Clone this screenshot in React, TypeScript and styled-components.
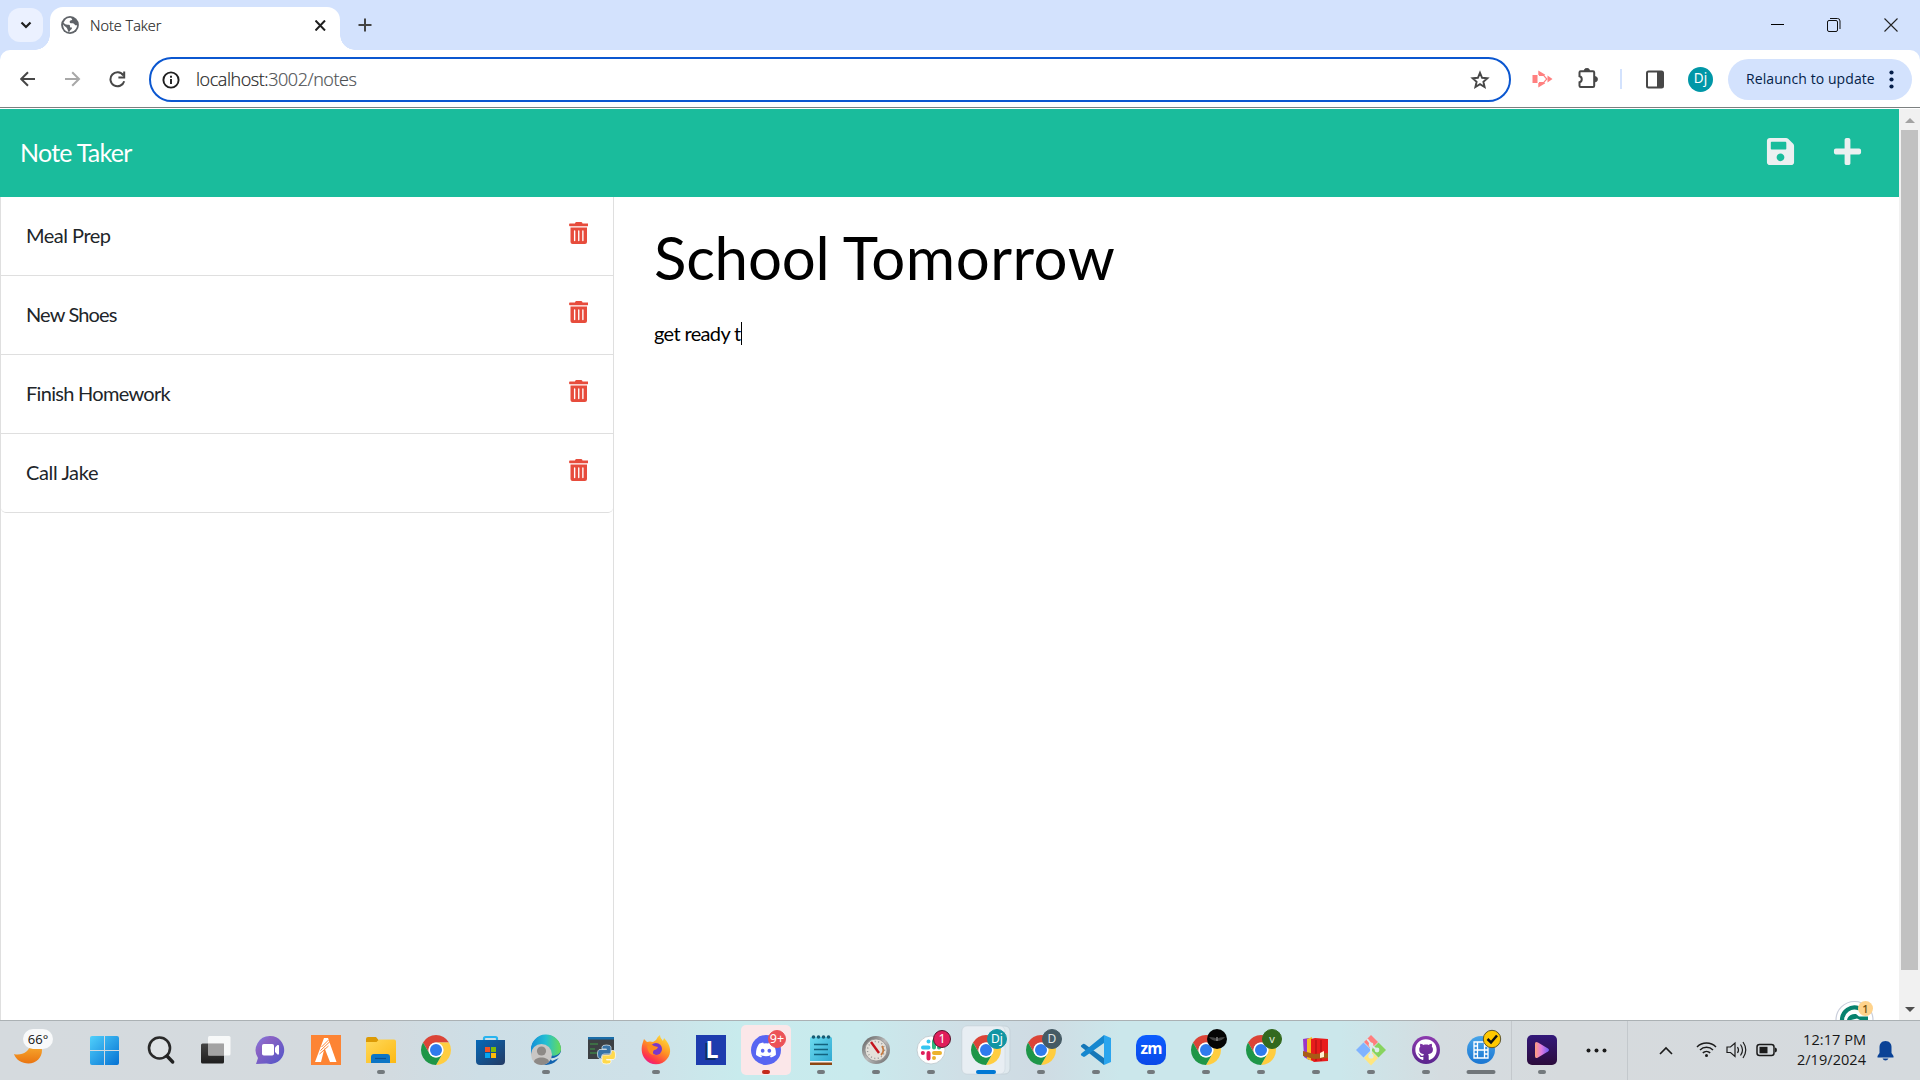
import React from "react";
import styled, { createGlobalStyle } from "styled-components";
import { FaSave, FaPlus, FaTrashAlt, FaGithub } from "react-icons/fa";

const GlobalStyle = createGlobalStyle`
  * { box-sizing: border-box; }
  body { margin: 0; overflow: hidden; background: #fff; }
`;

const UI = `"Open Sans", "Noto Sans", sans-serif`;

const Screen = styled.div`
  display: flex;
  flex-direction: column;
  width: 1920px;
  height: 1080px;
  background: #fff;
  font-family: Lato, sans-serif;
`;

/* ---------- browser chrome ---------- */
const TabStrip = styled.div`
  display: flex;
  height: 50px;
  padding-left: 8px;
  background: #d3e2fd;
`;
const TabSearch = styled.div`
  width: 35px;
  height: 34px;
  margin-top: 8px;
  border-radius: 12px;
  background: #ebf1ff;
  display: grid;
  place-items: center;
`;
const Tab = styled.div`
  position: relative;
  display: flex;
  align-items: center;
  width: 290px;
  height: 43px;
  margin: 7px 0 0 7px;
  padding: 0 13px 7px 11px;
  border-radius: 13px 13px 0 0;
  background: #fff;
  &::before, &::after {
    content: "";
    position: absolute;
    bottom: 0;
    width: 15px;
    height: 15px;
  }
  &::before { left: -15px; background: radial-gradient(circle at 0 0, transparent 14.5px, #fff 15px); }
  &::after { right: -15px; background: radial-gradient(circle at 100% 0, transparent 14.5px, #fff 15px); }
`;
const TabTitle = styled.span`
  flex: 1;
  margin-left: 11px;
  padding-top: 2px;
  font: 300 14.5px/20px ${UI};
  letter-spacing: 0;
  color: #1f1f1f;
  -webkit-text-stroke: 0.2px #1f1f1f;
`;
const NewTab = styled.div`
  width: 50px;
  height: 50px;
  display: grid;
  place-items: center;
`;
const WindowButtons = styled.div`
  display: flex;
  margin-left: auto;
`;
const WindowButton = styled.div`
  width: 57px;
  height: 49px;
  display: grid;
  place-items: center;
`;
const ToolbarBack = styled.div`
  height: 59px;
  background: linear-gradient(#d3e2fd 30px, #fff 30px);
`;
const Toolbar = styled.div`
  display: flex;
  align-items: center;
  height: 58px;
  padding: 1px 8px 0 5px;
  border-radius: 10px 10px 0 0;
  border-bottom: 1px solid #7c8080;
  background: #fff;
`;
const ToolSlot = styled.div<{ $w: number }>`
  width: ${(p) => p.$w}px;
  height: 46px;
  display: grid;
  place-items: center;
  flex: none;
`;
const Omnibox = styled.div`
  display: flex;
  align-items: center;
  flex: 1;
  height: 45px;
  margin: 1px 8px 0 9px;
  padding: 0 19px 0 11px;
  border: 2px solid #0b57d0;
  border-radius: 23px;
`;
const Address = styled.div`
  flex: 1;
  margin-left: 16px;
  padding-bottom: 1px;
  font: 300 18px/26px ${UI};
  letter-spacing: -0.45px;
  color: #4c4f52;
  -webkit-text-stroke: 0.2px currentColor;
  b { font-weight: 300; color: #1f1f1f; }
`;
const Divider = styled.div`
  width: 2px;
  height: 20px;
  background: #d3e2fd;
`;
const Profile = styled.div`
  width: 25px;
  height: 25px;
  border-radius: 50%;
  background: #0097a7;
  color: #fff;
  font: 400 13.5px/23px "Noto Sans", sans-serif;
  text-align: center;
`;
const Relaunch = styled.div`
  display: flex;
  align-items: center;
  justify-content: space-between;
  width: 184px;
  height: 41px;
  margin-left: 6px;
  padding: 0 18px;
  border-radius: 21px;
  background: #d3e2fd;
  color: #041e49;
  font: 400 14px/20px ${UI};
  letter-spacing: 0.08px;
  white-space: nowrap;
`;

/* ---------- page ---------- */
const Viewport = styled.div`
  display: flex;
  height: 911px;
  overflow: hidden;
`;
const Page = styled.div`
  display: flex;
  flex-direction: column;
  width: 1899px;
`;
const NavBar = styled.header`
  display: flex;
  align-items: center;
  flex: none;
  height: 88px;
  padding: 0 36px 2px 20px;
  background: #1abc9c;
  color: #fff;
`;
const Brand = styled.h1`
  flex: 1;
  margin: 0;
  font-size: 25px;
  font-weight: 400;
  line-height: 30px;
  letter-spacing: -0.75px;
`;
const NavIcon = styled.span`
  display: flex;
  margin: -1px 0 0 36px;
  color: #ecf0f1;
  font-size: 31px;
`;
const Body = styled.div`
  display: flex;
  flex: 1;
`;
const Sidebar = styled.aside`
  width: 614px;
  border: solid #dfdfdf;
  border-width: 0 1px;
`;
const NoteItem = styled.div<{ $tracking: number }>`
  display: flex;
  justify-content: space-between;
  height: 79px;
  padding: 23px 25px 0 25px;
  border-bottom: 1px solid #dfdfdf;
  color: #212529;
  font-size: 20px;
  line-height: 30px;
  letter-spacing: ${(p) => p.$tracking}px;
  &:last-child { border-radius: 0 0 5px 5px; }
  svg { width: 19.5px; height: 22px; margin-top: 2px; color: #e74c3c; }
`;
const Editor = styled.main`
  position: relative;
  flex: 1;
  padding: 24px 40px;
  color: #000;
`;
const NoteTitle = styled.h2`
  margin: 0;
  font-size: 60px;
  font-weight: 400;
  line-height: 72px;
  letter-spacing: 0.5px;
  word-spacing: -2px;
  &::first-line { letter-spacing: 0.2px; }
`;
const Word = styled.span<{ $tracking: number }>`
  letter-spacing: ${(p) => p.$tracking}px;
`;
const NoteText = styled.p`
  display: flex;
  align-items: center;
  margin: 25px 0 0;
  font-size: 20px;
  line-height: 30px;
  letter-spacing: -0.65px;
`;
const Caret = styled.i`
  width: 1px;
  height: 23px;
  background: #000;
`;
const Assistant = styled.div`
  position: absolute;
  right: 22px;
  bottom: 0;
  width: 42px;
  height: 22px;
  svg { display: block; }
`;
const AssistantBadge = styled.span`
  position: absolute;
  left: 23px;
  top: 3px;
  width: 15px;
  height: 15px;
  border-radius: 50%;
  background: #ffd38c;
  color: #7a5410;
  font: 600 11px/15px ${UI};
  text-align: center;
`;
const ScrollBar = styled.div`
  display: flex;
  flex-direction: column;
  justify-content: space-between;
  align-items: center;
  width: 21px;
  background: #f1f1f1;
`;
const ScrollThumb = styled.div`
  width: 17px;
  height: 840px;
  background: #c1c1c1;
`;
const ScrollArrow = styled.div<{ $down?: boolean }>`
  height: ${(p) => (p.$down ? 50 : 21)}px;
  padding-top: ${(p) => (p.$down ? 37 : 9)}px;
  svg { display: block; }
`;

/* ---------- taskbar ---------- */
const TaskBar = styled.footer`
  display: flex;
  height: 60px;
  box-shadow: inset 0 1px 0 #abb1b4;
  background: linear-gradient(90deg, #d5dade 0, #d4dade 360px, #cddee6 480px, #cee1e8 640px, #c8ebed 740px,
    #c9eaed 860px, #cfdfe6 960px, #cfdbe3 1040px, #cbe7eb 1120px, #cbe7eb 1340px, #d4dce0 1440px, #d6dadd 1560px, #d5dade 100%);
`;
const Weather = styled.div`
  position: relative;
  width: 78px;
`;
const Temperature = styled.span`
  position: absolute;
  left: 23px;
  top: 9px;
  width: 30px;
  height: 20px;
  border-radius: 10px;
  background: #f8f9fa;
  color: #111;
  font: 400 13px/20px ${UI};
  text-align: center;
`;
const AppSlot = styled.div<{ $w?: number }>`
  position: relative;
  width: ${(p) => p.$w ?? 55}px;
  height: 60px;
  flex: none;
  svg { display: block; }
`;
const Badge = styled.span<{ $bg: string; $x?: number; $y?: number; $s?: number; $edge?: string; $fs?: number; $c?: string }>`
  position: absolute;
  left: ${(p) => p.$x ?? 29}px;
  top: ${(p) => p.$y ?? 9}px;
  width: ${(p) => p.$s ?? 20}px;
  height: ${(p) => p.$s ?? 20}px;
  border-radius: 50%;
  background: ${(p) => p.$bg};
  border: 1px solid ${(p) => p.$edge ?? p.$bg};
  color: ${(p) => p.$c ?? "#fff"};
  font: 400 ${(p) => p.$fs ?? 12}px/${(p) => (p.$s ?? 20) - 3}px "Noto Sans", sans-serif;
  text-align: center;
`;
const LetterTile = styled.div`
  position: absolute;
  left: 13px;
  top: 15px;
  width: 30px;
  height: 30px;
  padding-left: 2px;
  background: #1d3cae;
  color: #fff;
  font: 700 23px/29px "Open Sans", sans-serif;
  text-align: center;
  text-shadow: -2px 2px 0 #0c2c63;
`;
const ZoomTile = styled.div`
  position: absolute;
  left: 13px;
  top: 15px;
  width: 30px;
  height: 30px;
  border-radius: 10px;
  background: linear-gradient(#0b5cff, #0a49e8);
  color: #fff;
  font: 700 15.5px/26px "Open Sans", sans-serif;
  letter-spacing: -0.8px;
  text-align: center;
`;
const GlyphHolder = styled.div<{ $x: number; $y: number; $size: number; $color: string }>`
  position: absolute;
  left: ${(p) => p.$x}px;
  top: ${(p) => p.$y}px;
  font-size: ${(p) => p.$size}px;
  color: ${(p) => p.$color};
`;
const Tray = styled.div`
  display: flex;
  flex: 1;
  align-items: center;
  border-left: 1px solid #c3c8cc;
  margin-top: 1px;
`;
const TrayIcon = styled.div<{ $w: number; $pad?: number }>`
  width: ${(p) => p.$w}px;
  height: 58px;
  padding-left: ${(p) => p.$pad ?? 0}px;
  display: grid;
  place-items: center;
  flex: none;
`;
const Clock = styled.div`
  flex: none;
  width: 84px;
  padding-bottom: 2px;
  color: #171717;
  font: 400 14.5px/20px ${UI};
  letter-spacing: 0.05px;
  text-align: right;
  white-space: nowrap;
`;

const Art = ({ children, w = 55 }: { children?: React.ReactNode; w?: number }) => (
  <svg width={w} height={60} viewBox={`0 0 ${w} 60`}>{children}</svg>
);
const Dot = ({ color = "#73797d" }) => <rect x="24" y="50" width="8" height="4" rx="2" fill={color} />;

const Chrome = () => (
  <g transform="translate(13 15) scale(.625)">
    <path fill="#db4437" d="M24 12H44.78A24 24 0 0 0 3.22 12L13.6 30A12 12 0 0 1 24 12Z" />
    <path fill="#ffcd40" d="M44.78 12A24 24 0 0 1 24 48L34.39 30A12 12 0 0 0 24 12Z" />
    <path fill="#1e9648" d="M3.22 12A24 24 0 0 0 24 48L34.39 30A12 12 0 0 1 13.6 30Z" />
    <circle cx="24" cy="24" r="12" fill="#fff" />
    <circle cx="24" cy="24" r="9.6" fill="#2f7bed" />
  </g>
);

const Gradients = styled.svg`
  position: absolute;
`;
const Defs = () => (
  <Gradients width="0" height="0">
    <defs>
      <linearGradient id="win" x1="0" y1="0" x2="1" y2="1"><stop stopColor="#50d0fb" /><stop offset="1" stopColor="#0571d3" /></linearGradient>
      <linearGradient id="moon" x1="0" y1="0" x2="0" y2="1"><stop stopColor="#f9b233" /><stop offset="1" stopColor="#ea7411" /></linearGradient>
      <linearGradient id="dark" x1="0" y1="0" x2="0" y2="1"><stop stopColor="#444" /><stop offset="1" stopColor="#1e1e1e" /></linearGradient>
      <linearGradient id="chat" x1="0" y1="0" x2="1" y2="1"><stop stopColor="#7c7fe6" /><stop offset=".3" stopColor="#8a62c4" /><stop offset="1" stopColor="#5055c9" /></linearGradient>
      <linearGradient id="folder" x1="0" y1="0" x2="1" y2="1"><stop stopColor="#ffd95b" /><stop offset="1" stopColor="#fdb913" /></linearGradient>
      <linearGradient id="store" x1="0" y1="0" x2="1" y2="1"><stop stopColor="#0669b8" /><stop offset="1" stopColor="#243a63" /></linearGradient>
      <linearGradient id="edge" x1="0" y1="0" x2="1" y2="0"><stop stopColor="#148fd8" /><stop offset=".5" stopColor="#24bfd2" /><stop offset="1" stopColor="#68dc54" /></linearGradient>
      <linearGradient id="fox" x1=".8" y1="0" x2=".2" y2="1"><stop stopColor="#ffe23d" /><stop offset=".45" stopColor="#ff9123" /><stop offset=".8" stopColor="#ff3548" /><stop offset="1" stopColor="#e4169b" /></linearGradient>
      <linearGradient id="note" x1="0" y1="0" x2="1" y2="1"><stop stopColor="#6ddbf0" /><stop offset="1" stopColor="#2ba6cf" /></linearGradient>
      <linearGradient id="metal" x1="0" y1="0" x2="1" y2="1"><stop stopColor="#555" /><stop offset=".5" stopColor="#bbb" /><stop offset="1" stopColor="#666" /></linearGradient>
      <linearGradient id="git" x1="0" y1="0" x2="0" y2="1"><stop stopColor="#8c3aae" /><stop offset="1" stopColor="#59258d" /></linearGradient>
      <linearGradient id="film" x1="0" y1="0" x2="0" y2="1"><stop stopColor="#48a5e9" /><stop offset="1" stopColor="#1a76d2" /></linearGradient>
      <linearGradient id="purple" x1="0" y1="0" x2="0" y2="1"><stop stopColor="#33187a" /><stop offset="1" stopColor="#2c0c3c" /></linearGradient>
      <linearGradient id="play" x1="0" y1="0" x2="1" y2="0"><stop stopColor="#ffa07a" /><stop offset=".45" stopColor="#e07be0" /><stop offset="1" stopColor="#6a5cf5" /></linearGradient>
    </defs>
  </Gradients>
);

const Browser = () => (
  <>
    <TabStrip>
      <TabSearch>
        <svg width="12" height="8" viewBox="0 0 12 8"><path d="M1.5 1.5L6 6l4.5-4.5" fill="none" stroke="#1f1f1f" strokeWidth="2.2" /></svg>
      </TabSearch>
      <Tab>
        <svg width="18" height="18" viewBox="0 0 18 18">
          <circle cx="9" cy="9" r="8.9" fill="#5f6368" />
          <path d="M9.8 1.9C8 1.7 5.4 2.6 4 4.2L2.5 6.8c1.2 1 2.2 2 4.3 2 1.8 0 2.2.4 2.2 1.6 0 1.1.9 1.2 1.9 1.2.3 1.2-.5 2-1.4 2.3l-1.5 2.3c4.3.3 8-3 8.1-7.1-1.3.6-2.1.2-2.7-.9-.6-1-1.7-.9-2.7-.9-1.4 0-2.2-.5-2-1.8.2-1.2 1.4-1 2.2-1.4.7-.4.2-1.5-1.1-2.2z" fill="#fff" />
          <path d="M2.1 8.2c.3 1.2 2.3 2.2 3.3 3.4.9 1 1.2 2.2 2.2 4.4C4.5 15.6 2 12.6 2.1 8.2Z" fill="#fff" />
        </svg>
        <TabTitle>Note Taker</TabTitle>
        <svg width="12" height="11" viewBox="0 0 12 11"><path d="M.5.5l9.5 10M10 .5l-9.5 10" stroke="#1f1f1f" strokeWidth="2" /></svg>
      </Tab>
      <NewTab>
        <svg width="14" height="14" viewBox="0 0 14 14"><path d="M7 .5v13M.5 7h13" stroke="#444" strokeWidth="2" /></svg>
      </NewTab>
      <WindowButtons>
        <WindowButton><svg width="13" height="13" viewBox="0 0 13 13"><path d="M0 6.5h13" stroke="#000" /></svg></WindowButton>
        <WindowButton>
          <svg width="16" height="14" viewBox="0 0 16 14" fill="none" stroke="#111">
            <rect x=".5" y="2.5" width="10" height="11" rx="1.5" /><path d="M3 .5h7.5a2.5 2.5 0 0 1 2.5 2.5V11" />
          </svg>
        </WindowButton>
        <WindowButton><svg width="15" height="14" viewBox="0 0 15 14"><path d="M.5.5l13 13M13.5.5l-13 13" stroke="#222" strokeWidth="1.1" /></svg></WindowButton>
      </WindowButtons>
    </TabStrip>
    <ToolbarBack>
      <Toolbar>
        <ToolSlot $w={45}><svg width="16" height="16" viewBox="0 0 16 16" fill="none" stroke="#474747" strokeWidth="2"><path d="M15 8H1.5M8 1.2L1.2 8 8 14.8" /></svg></ToolSlot>
        <ToolSlot $w={45}><svg width="16" height="16" viewBox="0 0 16 16" fill="none" stroke="#a8a8a8" strokeWidth="2"><path d="M0 8H13.5M7.2 1.2L14 8l-6.8 6.8" /></svg></ToolSlot>
        <ToolSlot $w={45}><svg width="17" height="17" viewBox="0 0 17 17" fill="none" stroke="#474747" strokeWidth="2"><path d="M14.3 4.4A7 7 0 1 0 15.2 10.2M15.2.6v6H9.4" /></svg></ToolSlot>
        <Omnibox>
          <svg width="18" height="18" viewBox="0 0 18 18" fill="none" stroke="#1f1f1f" strokeWidth="1.9"><circle cx="9" cy="9" r="7.6" /><path d="M9 8v5M9 4.8v2" /></svg>
          <Address><b>localhost:</b>3002/notes</Address>
          <svg width="20" height="20" viewBox="0 0 20 20"><path d="M10 2.8l2.1 5 5.3.5-4 3.5 1.2 5.2-4.6-2.8L5.4 17l1.2-5.2-4-3.5 5.3-.5z" fill="none" stroke="#474747" strokeWidth="1.9" /></svg>
        </Omnibox>
        <ToolSlot $w={46}>
          <svg width="21" height="18" viewBox="0 0 21 18" fill="#ff8080">
            <path d="M.5 5H5.5v8H.5zM6.3.5l7 4.2-1.5 1-5.5-.8zM6.3 17.5l7-4.2-1.5-1-5.5.8zM15.5 5.5L20.5 9l-5 3.5z" />
            <path d="M7 5.4h4.6L14.8 9l-3.2 3.6H7" fill="none" stroke="#ff8080" strokeWidth="1.2" />
          </svg>
        </ToolSlot>
        <ToolSlot $w={46}>
          <svg width="22" height="22" viewBox="0 0 22 22">
            <path d="M2.5 4.5q0-1.2 1.2-1.2H16q1.2 0 1.2 1.2V17.7q0 1.2-1.2 1.2H3.7q-1.2 0-1.2-1.2V14.3c3-.6 3-5.4 0-6Z" fill="none" stroke="#474747" strokeWidth="2" />
            <path d="M7.2 3a2.7 2.7 0 0 1 5.4 0zM17.8 8.5a2.7 2.7 0 0 1 0 5.4z" fill="#474747" stroke="#474747" strokeWidth=".8" />
          </svg>
        </ToolSlot>
        <ToolSlot $w={20}><Divider /></ToolSlot>
        <ToolSlot $w={48}>
          <svg width="18" height="19" viewBox="0 0 18 19"><rect x="1" y="1.5" width="16" height="16" rx="1.5" fill="none" stroke="#474747" strokeWidth="2" /><path d="M11 1h6v17h-6z" fill="#474747" /></svg>
        </ToolSlot>
        <ToolSlot $w={43}><Profile>Dj</Profile></ToolSlot>
        <Relaunch>
          Relaunch to update
          <svg width="5" height="19" viewBox="0 0 5 19" fill="#041e49"><circle cx="2.5" cy="2.5" r="2.1" /><circle cx="2.5" cy="9.5" r="2.1" /><circle cx="2.5" cy="16.5" r="2.1" /></svg>
        </Relaunch>
      </Toolbar>
    </ToolbarBack>
  </>
);

const notes = [
  { title: "Meal Prep", tracking: -0.5 },
  { title: "New Shoes", tracking: -0.85 },
  { title: "Finish Homework", tracking: -0.7 },
  { title: "Call Jake", tracking: -0.37 },
];

const NotesPage = () => (
  <Viewport>
    <Page>
      <NavBar>
        <Brand>Note Taker</Brand>
        <NavIcon><FaSave /></NavIcon>
        <NavIcon><FaPlus /></NavIcon>
      </NavBar>
      <Body>
        <Sidebar>
          {notes.map((n) => (
            <NoteItem key={n.title} $tracking={n.tracking}>{n.title}<FaTrashAlt /></NoteItem>
          ))}
        </Sidebar>
        <Editor>
          <NoteTitle><Word $tracking={-0.2}>School </Word><Word $tracking={0.5}>Tomorrow</Word></NoteTitle>
          <NoteText>get ready t<Caret /></NoteText>
          <Assistant>
            <svg width="42" height="22" viewBox="0 0 42 22">
              <circle cx="19.5" cy="22" r="18.5" fill="#fff" stroke="#c9cedb" strokeWidth="1.2" />
              <path d="M7 22a12.5 12.5 0 0 1 17-11.6" fill="none" stroke="#07826e" strokeWidth="4.2" />
              <path d="M12 22c1-4.5 5-6.5 9-6l3 2.5h9V22h-8l-3-1.5-6 1.5z" fill="#07826e" />
            </svg>
            <AssistantBadge>1</AssistantBadge>
          </Assistant>
        </Editor>
      </Body>
    </Page>
    <ScrollBar>
      <ScrollArrow><svg width="10" height="5" viewBox="0 0 10 5"><path d="M0 5l5-5 5 5z" fill="#a3a3a3" /></svg></ScrollArrow>
      <ScrollThumb />
      <ScrollArrow $down><svg width="10" height="5" viewBox="0 0 10 5"><path d="M0 0l5 5 5-5z" fill="#505050" /></svg></ScrollArrow>
    </ScrollBar>
  </Viewport>
);

const DiscordMark = () => (
  <svg width="20" height="20" viewBox="0 0 24 24" fill="currentColor">
    <path d="M20.3 4.4A19.8 19.8 0 0 0 15.4 2.9l-.6 1.3a18.3 18.3 0 0 0-5.5 0L8.6 2.9a19.7 19.7 0 0 0-4.9 1.5C.5 9-.3 13.6.1 18.1a20 20 0 0 0 6 3l1.2-2-1.9-.9.4-.3a14.2 14.2 0 0 0 12.3 0l.4.3-1.9.9 1.2 2a19.8 19.8 0 0 0 6-3c.5-5.2-.8-9.7-3.5-13.7zM8 15.3c-1.2 0-2.2-1.1-2.2-2.4S6.8 10.5 8 10.5s2.2 1.1 2.2 2.4-1 2.4-2.2 2.4zm8 0c-1.2 0-2.2-1.1-2.2-2.4s1-2.4 2.2-2.4 2.2 1.1 2.2 2.4-1 2.4-2.2 2.4z" />
  </svg>
);

const Indicators = styled.svg`
  flex: none;
`;

const Tasks = () => (
  <TaskBar>
    <Defs />
    <Weather>
      <Art w={78}><path d="M14 34c7 2 16-2 16-10 4-3 12 1 12 6 0 8-6 13.5-13.5 13.5C22 43.5 16 40 14 34Z" fill="url(#moon)" /></Art>
      <Temperature>66°</Temperature>
    </Weather>
    <AppSlot><Art><path fill="url(#win)" d="M12 18q0-2 2-2h12v14H12zM27 16h12q2 0 2 2v12H27zM12 31h14v14H14q-2 0-2-2zM27 31h14v12q0 2-2 2H27z" /></Art></AppSlot>
    <AppSlot><Art><circle cx="26.5" cy="28" r="10.5" fill="#dfe3e6" stroke="#292929" strokeWidth="2.6" /><path d="M34 36l5.7 6" stroke="#222" strokeWidth="3.4" strokeLinecap="round" /></Art></AppSlot>
    <AppSlot><Art><rect x="13" y="23.5" width="23" height="20" rx="1.5" fill="url(#dark)" /><rect x="20" y="16" width="22.5" height="19.5" rx="1.5" fill="#fff" opacity=".82" /><path d="M20 23.5h16v12H20z" fill="#999" opacity=".85" /></Art></AppSlot>
    <AppSlot><Art><path d="M27.5 16a14 14 0 1 1-4 27.5L13 44l2-6A14.2 14.2 0 0 1 27.5 16Z" fill="url(#chat)" /><rect x="19" y="24" width="12" height="11.5" rx="1.8" fill="#fff" /><path d="M32 27.5l2.5-2.5q1.5-.5 1.5 1v7.5q0 1.5-1.5 1L32 32z" fill="#fff" /></Art></AppSlot>
    <AppSlot>
      <Art>
        <path d="M13 15h30v30H13z" fill="#fd8434" />
        <path d="M26 18h4l8.5 24H32l-5.5-14L23 42h-6z" fill="#fff" />
        <path d="M23.5 27l7-7M22.5 30.5l9.5-9M21.5 34l9-8" stroke="#fd8434" strokeWidth="1" />
      </Art>
    </AppSlot>
    <AppSlot><Art><path d="M13 19q0-2 2-2h8l2.500 3H30v7H13z" fill="#dc9a05" /><path d="M13 22h10.5l2.5-2.5H41q2 0 2 2V43H13z" fill="url(#folder)" /><path d="M18 43v-6q0-3 3-3h13q3 0 3 3v6z" fill="#0c75c5" /><path d="M22 38.5h11" stroke="#0b4f8e" strokeWidth="1.2" /><Dot /></Art></AppSlot>
    <AppSlot><Art><Chrome /></Art></AppSlot>
    <AppSlot><Art><path d="M21 22v-3.5q0-1.5 1.5-1.5h10q1.5 0 1.5 1.5V22" fill="none" stroke="#29b4ef" strokeWidth="2.2" /><path d="M13 20h29v21q0 4-4 4H17q-4 0-4-4z" fill="url(#store)" /><path d="M22 27h5v5h-5z" fill="#f35325" /><path d="M28 27h5v5h-5z" fill="#81bc06" /><path d="M22 33h5v5h-5z" fill="#05a6f0" /><path d="M28 33h5v5h-5z" fill="#ffba08" /></Art></AppSlot>
    <AppSlot><Art><circle cx="28" cy="30" r="15" fill="#1263af" /><path d="M13 30a15 15 0 0 1 30-1c0 6-7 8-12 6q4-5-2-9c-5-2-12 0-15 9z" fill="url(#edge)" /><path d="M32 38q7 1 11-6l1.5 3-3.5 3-7 3z" fill="#cee1e8" /><circle cx="23.5" cy="34.5" r="10.5" fill="#c9c6c4" /><circle cx="23.5" cy="31" r="4.6" fill="#8d8986" /><path d="M16 42c0-6 15-6 15 0-4 4-11 4-15 0z" fill="#8d8986" /><Dot /></Art></AppSlot>
    <AppSlot><Art>
      <path d="M15 17h26v22H15z" fill="#3c4043" /><path d="M15 17h26v2.500H15z" fill="#1b6da8" />
      <path d="M17 24h8M17 29h5M17 33h7" stroke="#3f9d48" strokeWidth="1" />
      <path d="M29 29v-2q0-2 4.5-2t4.5 2v5q0 2-2 2h-5q-2.500 0-2.500 3v1.500H27q-2.500 0-2.500-4.500T27 29.500h6.500V29z" fill="#3873a6" stroke="#e9f3f7" strokeWidth=".7" />
      <path d="M38 40v2q0 2-4.500 2T29 42v-5q0-2 2-2h5q2.500 0 2.500-3v-1.500H40q2.500 0 2.500 4.500T40 39.500h-6.500v.5z" fill="#ffd94c" stroke="#fff" strokeWidth=".7" />
    </Art></AppSlot>
    <AppSlot><Art><path d="M15 22l1-3 3 3q3-1 6 0l3-2q1-3 4-5c0 3 2 4 3 6 0-1 1-2 1-3 7 7 8 15 3 21-5 7-17 7-22 0-4-5-4-12-2-17Z" fill="url(#fox)" /><circle cx="28" cy="29" r="6" fill="#7a37c9" /><path d="M19 26q4-3 7 0l4 1q-1 3-4 3-3 4 2 5-8 1-9-9z" fill="#ff8a1f" /><Dot /></Art></AppSlot>
    <AppSlot><LetterTile>L</LetterTile></AppSlot>
    <AppSlot>
      <Art><rect x="3" y="5" width="50" height="50" rx="5" fill="#fbe7e9" /><circle cx="28" cy="30" r="15" fill="#5865f2" /><Dot color="#c42b1c" /></Art>
      <GlyphHolder $x={18} $y={20} $size={20} $color="#fff"><DiscordMark /></GlyphHolder>
      <Badge $bg="#ec5257" $x={30} $y={10} $s={18} $fs={12.5}>9+</Badge>
    </AppSlot>
    <AppSlot><Art><rect x="17" y="17" width="22" height="28" rx="1.5" fill="url(#note)" /><path d="M17 42h22v3H17z" fill="#8c4713" /><path d="M17 41h22v1.500H17z" fill="#f4f4f4" /><path d="M21 24.500h14M21 29.500h14M21 34.500h14" stroke="#13627e" strokeWidth="1.5" /><g fill="#175b73"><circle cx="20.5" cy="17" r="1.8" /><circle cx="25.5" cy="17" r="1.8" /><circle cx="30.5" cy="17" r="1.8" /><circle cx="35.5" cy="17" r="1.8" /></g><Dot /></Art></AppSlot>
    <AppSlot><Art><circle cx="28" cy="30" r="14" fill="url(#metal)" /><circle cx="28" cy="30" r="11" fill="#e4e1da" stroke="#8b8b8b" strokeWidth=".8" /><circle cx="28" cy="30" r="8.5" fill="none" stroke="#999" strokeDasharray="1 2.5" strokeWidth="1.5" /><path d="M23 22l8 11" stroke="#c5141c" strokeWidth="2.4" /><path d="M34 26q3 5-1 9" stroke="#c57b42" strokeWidth="1.8" fill="none" /><Dot /></Art></AppSlot>
    <AppSlot>
      <Art>
        <circle cx="28" cy="30" r="14" fill="#fff" stroke="#bac5ca" strokeWidth=".8" />
        <g strokeWidth="4" strokeLinecap="round">
          <path d="M25.500 21.500v.1M20 27.500h5.500" stroke="#36c5f0" /><path d="M31 21v6.500M36 27.500h.1" stroke="#2eb67d" /><path d="M31 33h6M31 38v.1" stroke="#ecb22e" /><path d="M19.800 33h.1M25.500 33v5.500" stroke="#e01e5a" />
        </g>
        <Dot />
      </Art>
      <Badge $bg="#e01e5a" $edge="#56152b" $x={30} $y={10} $s={18} $fs={12.5}>1</Badge>
    </AppSlot>
    <AppSlot>
      <Art><rect x="4" y="6" width="48" height="48" rx="5" fill="#dfe9ee" stroke="#c6d2d9" /><rect x="4" y="6" width="43" height="48" rx="5" fill="#e8eef3" stroke="#d0dae1" strokeWidth=".7" /><Chrome /><rect x="18" y="50" width="20" height="4" rx="2" fill="#0078d4" /></Art>
      <Badge $bg="#1195a3">Dj</Badge>
    </AppSlot>
    <AppSlot><Art><Chrome /><Dot /></Art><Badge $bg="#455a64" $c="#dfe3e5">D</Badge></AppSlot>
    <AppSlot><Art>
      <path d="M36 15l7 3v24l-7 3z" fill="#2aa5ee" />
      <path d="M13.300 27q-1-1 0-1.800l1.700-1.200q1-.6 2 .2L36 38v7z" fill="#1577b8" />
      <path d="M36 15v8L17 36.500q-1 .8-2 .1l-1.700-1.200q-1-.9 0-1.900z" fill="#1687cf" />
      <Dot />
    </Art></AppSlot>
    <AppSlot><Art><Dot /></Art><ZoomTile>zm</ZoomTile></AppSlot>
    <AppSlot><Art><Chrome /><circle cx="39" cy="19" r="10" fill="#050505" /><path d="M31 17q6 0 8 2 2-2 8-2-3 4-8 4-5 0-8-4z" fill="#444" /><path d="M38.300 17h1.400v4h-1.400z" fill="#888" /><Dot /></Art></AppSlot>
    <AppSlot><Art><Chrome /><Dot /></Art><Badge $bg="#33691e" $fs={11} $c="#e3eadf">v</Badge></AppSlot>
    <AppSlot><Art>
      <path d="M15 19l6-1v22l-5-3z" fill="#9b35c8" /><path d="M19 19l5-2v24l-5-2z" fill="#f5bd22" /><path d="M23 19l4-1 13 1v22l-14 1-3-2z" fill="#e81c1c" /><path d="M28 20v21M33 20v21" stroke="#a50f12" strokeWidth="1" />
      <path d="M15 31l11 3 14-1v5l-14 1-11-3z" fill="#a85b16" /><path d="M32 33l4-2v6l-4 1z" fill="#fff0cf" /><Dot />
    </Art></AppSlot>
    <AppSlot><Art>
      <path d="M28 15l7 7-7 7-7-7z" fill="#ff7e7e" /><path d="M20.500 22.500l7.500 7.500-7.500 7.500L13 30z" fill="#80b3ff" /><path d="M35.500 22.500L43 30l-7.500 7.500L28 30z" fill="#87d45f" /><path d="M28 31l7 7-7 7.500-7-7.500z" fill="#ffe680" />
      <path d="M24 19l4 5v12M28 25l6 5" stroke="#dcecee" strokeWidth="2" fill="none" /><circle cx="28" cy="25" r="2.4" fill="#dcecee" /><circle cx="34" cy="30" r="2.4" fill="#dcecee" /><circle cx="28" cy="36" r="2.6" fill="#dcecee" /><Dot />
    </Art></AppSlot>
    <AppSlot><Art><circle cx="28" cy="30" r="14" fill="url(#git)" /><Dot /></Art><GlyphHolder $x={17} $y={19} $size={22} $color="#fff"><FaGithub /></GlyphHolder></AppSlot>
    <AppSlot>
      <Art>
        <circle cx="28" cy="30" r="14" fill="url(#film)" />
        <path d="M21 22h14v16H21zM24.500 22v16M31.500 22v16M24.500 30h7M21 26h3.500M21 30h3.500M21 34h3.500M31.500 26H35M31.500 30H35M31.500 34H35" fill="none" stroke="#fff" strokeWidth="1.3" />
        <circle cx="39" cy="19" r="8.7" fill="#ffc800" stroke="#5b532e" strokeWidth="1" /><path d="M34.500 19l3.500 3.500 6-7" fill="none" stroke="#111" strokeWidth="2.5" />
        <rect x="13.5" y="50" width="29" height="4" rx="2" fill="#70767a" />
      </Art>
    </AppSlot>
    <AppSlot $w={58}><Art w={58}><path d="M3.500 1v59" stroke="#c3c8cc" /><rect x="19" y="15" width="30" height="30" rx="5" fill="url(#purple)" /><path d="M27 24q0-3 3-1.500l10 6q2 1.500 0 3l-10 6q-3 1.500-3-1.500z" fill="url(#play)" /><rect x="30" y="50" width="8" height="4" rx="2" fill="#73797d" /></Art></AppSlot>
    <AppSlot $w={61}><Art w={61}><g fill="#1b1b1b"><circle cx="22.5" cy="30.5" r="2" /><circle cx="30.5" cy="30.5" r="2" /><circle cx="38.5" cy="30.5" r="2" /></g></Art></AppSlot>
    <Tray>
      <TrayIcon $w={68} $pad={8}><svg width="14" height="9" viewBox="0 0 14 9"><path d="M1 8l6-6 6 6" fill="none" stroke="#1b1b1b" strokeWidth="1.6" /></svg></TrayIcon>
      <Indicators width="86" height="26" viewBox="0 0 86 26" fill="none" stroke="#1b1b1b" strokeWidth="1.5">
        <path d="M1 9a13.500 13.500 0 0 1 19 0M4 12a9.300 9.300 0 0 1 13 0M6.800 14.900a5.400 5.400 0 0 1 7.400 0" />
        <circle cx="10.5" cy="17.5" r="1.5" fill="#1b1b1b" stroke="none" />
        <path d="M31 9h3.500l4.500-4v13.500l-4.500-4H31z" strokeWidth="1.2" />
        <path d="M41.500 9q2 3 0 6M44.500 6.500q4 5.500 0 11M47 4q5.500 7.800 0 16" strokeWidth="1.2" />
        <rect x="61" y="6.5" width="17" height="11" rx="2.5" /><path d="M63.500 8.800h8v6.500h-8z" fill="#1b1b1b" stroke="none" /><path d="M79 9.500q2 .3 2 2.500t-2 2.500z" fill="#1b1b1b" stroke="none" />
      </Indicators>
      <Clock>12:17 PM<br />2/19/2024</Clock>
      <TrayIcon $w={38}><svg width="17" height="20" viewBox="0 0 17 20" fill="#0a4296"><path d="M8.500 0C12.500 0 14.500 3 14.500 6v6l2 3v1.500H.5V15l2-3V6c0-3 2-6 6-6zM5.500 17.500h6q-1 2-3 2t-3-2z" /></svg></TrayIcon>
    </Tray>
  </TaskBar>
);

const App = () => (
  <Screen>
    <GlobalStyle />
    <Browser />
    <NotesPage />
    <Tasks />
  </Screen>
);

export default App;
